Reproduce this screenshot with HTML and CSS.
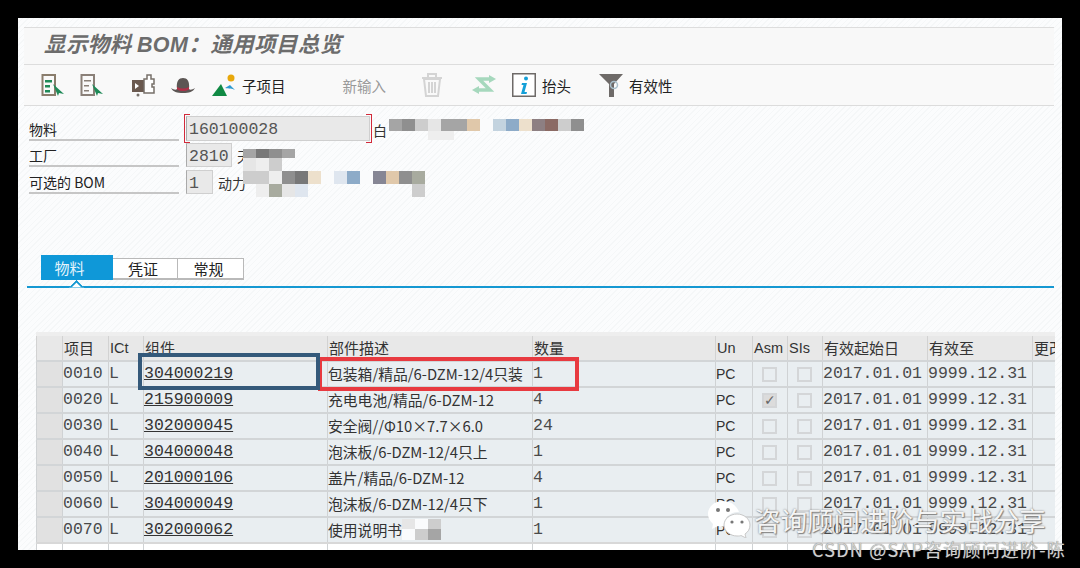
FILE: index.html
```html
<!DOCTYPE html>
<html lang="zh">
<head>
<meta charset="utf-8">
<title>显示物料 BOM</title>
<link rel="stylesheet" href="styles.css">
</head>
<body>
<div class="window">
  <header class="title"><h1>显示物料 <b class="latin">BOM</b>：通用项目总览</h1></header>
  <nav class="toolbar">
    <svg class="ico i1" width="24" height="24" viewBox="0 0 24 24"><path d="M1.500 2H14v20H1.500z" fill="none" stroke="#8a7d6c" stroke-width="2"/><path d="M4 7h7v2.500H4zM4 12h5v2.500H4zM4 17h5v2.500H4z" fill="#1f8a58"/><path d="M12 11l11 10-5-1-1 3z" fill="#1f8a58"/></svg>
    <svg class="ico i2" width="24" height="24" viewBox="0 0 24 24"><path d="M1.500 2H14v20H1.500z" fill="none" stroke="#8a8078" stroke-width="2"/><path d="M4 7h7v1.500H4zM4 12h5v1.500H4zM4 17h5v1.500H4z" fill="#8a8078"/><path d="M12 11l11 10-5-1-1 3z" fill="#1f8a58"/></svg>
    <svg class="ico i3" width="24" height="24" viewBox="0 0 24 24"><path d="M1 7h12v12H1z" fill="#6b5a50"/><path d="M4 10l4 3-4 3z" fill="#fff"/><path d="M13 6h3V2h4v4h3v5h-2v3h2v6h-10z" fill="#fff" stroke="#77706a" stroke-width="1.500"/><circle cx="7" cy="22" r="1.500" fill="#77706a"/></svg>
    <svg class="ico i4" width="24" height="24" viewBox="0 0 24 24"><path d="M0 15c3 2 5 2 6 1C5 8 8 5 12 5s7 3 6 11c1 1 3 1 6-1-2 4-6 5-12 5S2 19 0 15z" fill="#5c5654"/><path d="M6 14c4 2 8 2 12 0v2.500c-4 2-8 2-12 0z" fill="#b03048"/></svg>
    <svg class="ico i5" width="24" height="24" viewBox="0 0 24 24"><circle cx="19" cy="5" r="3.500" fill="#e8a80c"/><path d="M0 23L9 11l6 12z" fill="#108a44"/><path d="M13 15l5-3 5 5c-3-2-6-1-10-2z" fill="#2c9ad0"/></svg>
    <span class="tool t-sub">子项目</span>
    <span class="tool t-new">新输入</span>
    <svg class="ico i6" width="24" height="26" viewBox="0 0 24 26"><path d="M2 6h20M8 5V2h8v3" fill="none" stroke="#d4d4d4" stroke-width="2"/><path d="M4 7l2 17h12l2-17zM9 10v11M12 10v11M15 10v11" fill="none" stroke="#d4d4d4" stroke-width="2"/></svg>
    <svg class="ico i7" width="24" height="20" viewBox="0 0 24 20"><path d="M19 4H7l11 11H5" fill="none" stroke="#a6d8bd" stroke-width="3.500"/><path d="M17 0l7 4-7 4zM7 11l-7 4 7 4z" fill="#a6d8bd"/></svg>
    <svg class="ico i8" width="24" height="24" viewBox="0 0 24 24"><path d="M.75.75h22.500v22.500H.75z" fill="#fff" stroke="#6e6a68" stroke-width="1.500"/><circle cx="14" cy="5.500" r="2" fill="#14a0d8"/><path d="M10 10h5l-2.500 9H15l-.5 2H9l2.500-9H9.500z" fill="#14a0d8"/></svg>
    <span class="tool t-head">抬头</span>
    <svg class="ico i9" width="24" height="24" viewBox="0 0 24 24"><path d="M0 1h24l-9 10v13H10V11z" fill="#6e6a68"/><circle cx="15" cy="12" r="3.500" fill="none" stroke="#a9c0cc" stroke-width="1.500"/></svg>
    <span class="tool t-valid">有效性</span>
  </nav>

  <section class="form">
    <div class="row row-material">
      <label class="lbl">物料</label>
      <span class="field f-material">160100028</span>
      <span class="desc">白</span>
    </div>
    <div class="row row-plant">
      <label class="lbl">工厂</label>
      <span class="field f-plant">2810</span>
      <span class="desc">天</span>
    </div>
    <div class="row row-bom">
      <label class="lbl">可选的 BOM</label>
      <span class="field f-bom">1</span>
      <span class="desc">动力</span>
    </div>
  </section>

  <div class="tabs">
    <span class="tab active">物料</span>
    <span class="tab">凭证</span>
    <span class="tab">常规</span>
  </div>
  <div class="tabline"></div>

  <table class="grid">
    <colgroup>
      <col class="c-sel"><col class="c-item"><col class="c-ict"><col class="c-comp"><col class="c-desc"><col class="c-qty"><col class="c-un"><col class="c-asm"><col class="c-sis"><col class="c-from"><col class="c-to"><col class="c-chg">
    </colgroup>
    <thead>
      <tr><th></th><th>项目</th><th class="th-lat">ICt</th><th>组件</th><th>部件描述</th><th>数量</th><th class="th-lat">Un</th><th class="th-lat">Asm</th><th class="th-lat">SIs</th><th>有效起始日</th><th>有效至</th><th>更改</th></tr>
    </thead>
    <tbody>
      <tr><td class="sel"></td><td class="mono">0010</td><td class="mono">L</td><td class="mono"><a>304000219</a></td><td class="dsc">包装箱/精品/6-DZM-12/4只装</td><td class="mono">1</td><td class="un">PC</td><td><i class="cb"></i></td><td><i class="cb"></i></td><td class="mono">2017.01.01</td><td class="mono">9999.12.31</td><td></td></tr>
      <tr><td class="sel"></td><td class="mono">0020</td><td class="mono">L</td><td class="mono"><a>215900009</a></td><td class="dsc">充电电池/精品/6-DZM-12</td><td class="mono">4</td><td class="un">PC</td><td><i class="cb on">✓</i></td><td><i class="cb"></i></td><td class="mono">2017.01.01</td><td class="mono">9999.12.31</td><td></td></tr>
      <tr><td class="sel"></td><td class="mono">0030</td><td class="mono">L</td><td class="mono"><a>302000045</a></td><td class="dsc">安全阀//Φ10×7.7×6.0</td><td class="mono">24</td><td class="un">PC</td><td><i class="cb"></i></td><td><i class="cb"></i></td><td class="mono">2017.01.01</td><td class="mono">9999.12.31</td><td></td></tr>
      <tr><td class="sel"></td><td class="mono">0040</td><td class="mono">L</td><td class="mono"><a>304000048</a></td><td class="dsc">泡沫板/6-DZM-12/4只上</td><td class="mono">1</td><td class="un">PC</td><td><i class="cb"></i></td><td><i class="cb"></i></td><td class="mono">2017.01.01</td><td class="mono">9999.12.31</td><td></td></tr>
      <tr><td class="sel"></td><td class="mono">0050</td><td class="mono">L</td><td class="mono"><a>201000106</a></td><td class="dsc">盖片/精品/6-DZM-12</td><td class="mono">4</td><td class="un">PC</td><td><i class="cb"></i></td><td><i class="cb"></i></td><td class="mono">2017.01.01</td><td class="mono">9999.12.31</td><td></td></tr>
      <tr><td class="sel"></td><td class="mono">0060</td><td class="mono">L</td><td class="mono"><a>304000049</a></td><td class="dsc">泡沫板/6-DZM-12/4只下</td><td class="mono">1</td><td class="un">PC</td><td><i class="cb"></i></td><td><i class="cb"></i></td><td class="mono">2017.01.01</td><td class="mono">9999.12.31</td><td></td></tr>
      <tr><td class="sel"></td><td class="mono">0070</td><td class="mono">L</td><td class="mono"><a>302000062</a></td><td class="dsc">使用说明书</td><td class="mono">1</td><td class="un">PC</td><td><i class="cb"></i></td><td><i class="cb"></i></td><td class="mono">2017.01.01</td><td class="mono">9999.12.31</td><td></td></tr>
      <tr class="blank"><td></td><td></td><td></td><td></td><td></td><td></td><td></td><td></td><td></td><td></td><td></td><td></td></tr>
    </tbody>
  </table>

  <div class="mosaic m1"><i class="g3"></i><i class="g2"></i><i class="g5"></i><i class="g6"></i><i class="g3"></i><i class="g3"></i><i class="t1"></i><i class="w"></i><i class="b1"></i><i class="b2"></i><i class="t2"></i><i class="p1"></i><i class="p2"></i><i class="g5"></i><i class="g2"></i></div>
  <div class="mosaic m1b"><i class="g7"></i><i class="g7"></i></div>
  <div class="mosaic m2"><i class="g3"></i><i class="g1"></i><i class="g2"></i><i class="g3"></i></div>
  <div class="mosaic m3"><i class="g6"></i><i class="g7"></i><i class="g5"></i></div>
  <div class="mosaic m4"><i class="g5"></i><i class="g5"></i><i class="g7"></i><i class="g2"></i><i class="g1"></i><i class="t2"></i><i class="w"></i><i class="b3"></i><i class="b2"></i><i class="w"></i><i class="p3"></i><i class="t1"></i><i class="g2"></i><i class="g4"></i></div>
  <div class="mosaic m5"><i class="g7"></i><i class="g4"></i><i class="g6"></i><i class="b3"></i></div>
  <div class="mosaic m6"><i class="g5"></i></div>
  <div class="mosaic m7"><i class="g6"></i><i class="w"></i><i class="g5"></i></div>
  <div class="mosaic m8"><i class="w"></i><i class="g5"></i><i class="g3"></i></div>

  <div class="mark-red"></div>
  <div class="mark-blue"></div>
</div>

<svg class="wechat" width="44" height="38" viewBox="0 0 44 38"><path d="M16 1C7 1 1 7 1 14c0 4 2 7 5 10l-1 5 6-3c2 .5 4 .7 6 .5C16 18 24 11 32 12 30 6 24 1 16 1z" fill="#fff"/><path d="M30 14c-7 0-13 5-13 11s6 11 13 11c2 0 3 0 4-.5l5 2.500-1-4c3-2 5-5 5-9 0-6-6-11-13-11z" fill="#fff" stroke="#c8c8c8"/><circle cx="11" cy="10" r="2" fill="#777"/><circle cx="21" cy="10" r="2" fill="#777"/><circle cx="25" cy="22" r="1.600" fill="#777"/><circle cx="35" cy="22" r="1.600" fill="#777"/></svg>
<div class="wm wm-main">咨询顾问进阶与实战分享</div>
<div class="wm wm-csdn">CSDN @SAP咨询顾问进阶-陈</div>
</body>
</html>
```
FILE: styles.css
```css
* { box-sizing: border-box; }
html, body { margin: 0; height: 100%; }
body {
  width: 1080px;
  height: 568px;
  background: #000;
  padding: 18px;
  overflow: hidden;
  position: relative;
  font-family: "Noto Sans CJK SC", "Liberation Sans", sans-serif;
  color: #333;
}
.window {
  position: relative;
  width: 1044px;
  height: 532px;
  padding: 9px 8px 0 6px;
  overflow: hidden;
  background: repeating-linear-gradient(135deg, #fbfcfd 0 3px, #f5f7f8 3px 4px);
}
.title {
  height: 38px;
  background: #f8f8f8;
  border-top: 1px solid #ddd;
  border-bottom: 1px solid #ddd;
  padding-left: 20px;
}
.title h1 {
  margin: 0;
  font-size: 21.500px;
  line-height: 29px;
  font-weight: 700;
  font-style: italic;
  color: #6c6c6c;
  letter-spacing: 0.4px;
  white-space: nowrap;
}
.latin { font-family: "Liberation Sans", sans-serif; }
.toolbar {
  height: 41px;
  display: flex;
  align-items: center;
  background: #f9f9f9;
  border-bottom: 1px solid #dcdcdc;
}
.ico { flex: none; display: block; }
.i1 { margin-left: 17px; }
.i2 { margin-left: 15px; }
.i3 { margin-left: 27px; }
.i4 { margin-left: 16px; }
.i5 { margin-left: 17px; }
.i6 { margin-left: 34px; }
.i7 { margin-left: 28px; }
.i8 { margin-left: 16px; }
.i9 { margin-left: 28px; }
.tool { font-size: 14.500px; color: #222; white-space: nowrap; }
.t-sub { margin-left: 6px; }
.t-new { margin-left: 57px; color: #9a9a9a; }
.t-head { margin-left: 6px; }
.t-valid { margin-left: 6px; }

.form { padding: 9px 0 0 5px; height: 149px; }
.row { display: flex; align-items: flex-end; }
.row-material { height: 26px; }
.row-plant { height: 26px; }
.row-bom { height: 27px; }
.lbl {
  width: 150px;
  margin-right: 7px;
  height: 24px;
  font-size: 14px;
  line-height: 24px;
  color: #222;
  border-bottom: 2px solid #c6c6c6;
  white-space: nowrap;
}
.field {
  position: relative;
  display: block;
  height: 24px;
  padding-left: 2px;
  font-family: "Liberation Mono", monospace;
  font-size: 16.500px;
  line-height: 25px;
  color: #555;
  background: #e9e9e9;
  border: 1px solid #cfcfcf;
  border-left-color: #aaa;
  white-space: nowrap;
}
.f-material { width: 184px; height: 25px; }
.f-plant { width: 46px; }
.f-bom { width: 27px; }
.f-material::before, .f-material::after {
  content: "";
  position: absolute;
  top: -3px;
  bottom: -3px;
  width: 5px;
  border: 1.500px solid #d22a3a;
}
.f-material::before { left: -3px; border-right: 0; }
.f-material::after { right: -3px; border-left: 0; }
.desc { margin-left: 5px; font-size: 14px; line-height: 22px; color: #333; white-space: nowrap; }
.row-material .desc { margin-left: 3px; }

.tabs { display: flex; align-items: flex-end; height: 25px; margin-left: 17px; }
.tab {
  width: 65px;
  height: 22px;
  padding-right: 4px;
  font-size: 15px;
  line-height: 20px;
  text-align: center;
  color: #222;
  background: #fff;
  border: 1px solid #b9b9b9;
  border-left: 0;
  border-bottom-width: 2px;
}
.tab:last-child { width: 66px; }
.tab.active {
  width: 72px;
  height: 25px;
  padding-right: 15px;
  line-height: 25px;
  color: #e6f4fb;
  background: #0f98d8;
  border: 0;
}
.tabline {
  position: relative;
  height: 2px;
  margin: 6px 0 44px 3px;
  background: #1598d2;
}
.tabline::after {
  content: "";
  position: absolute;
  left: 44px;
  top: -4px;
  width: 9px;
  height: 9px;
  transform: rotate(45deg);
  background: #fff;
  border-top: 2px solid #1598d2;
  border-left: 2px solid #1598d2;
  clip-path: polygon(0 0, 100% 0, 0 100%);
}

.grid {
  table-layout: fixed;
  border-collapse: collapse;
  width: 1018px;
  margin-left: 12px;
  border-top: 4px solid #eeeeee;
}
.c-sel { width: 26px; } .c-item { width: 46px; } .c-ict { width: 35px; } .c-comp { width: 184px; }
.c-desc { width: 205px; } .c-qty { width: 183px; } .c-un { width: 37px; } .c-asm { width: 35px; }
.c-sis { width: 35px; } .c-from { width: 105px; } .c-to { width: 105px; } .c-chg { width: 22px; }
.grid th {
  height: 24px;
  padding: 0 0 0 1px;
  text-align: left;
  font-size: 15px;
  font-weight: 400;
  line-height: 24px;
  color: #333;
  background: #e8e8e8;
  border-left: 1px solid #d2d2d2;
  overflow: hidden;
  white-space: nowrap;
}
.grid .th-lat { font-family: "Liberation Sans", sans-serif; font-size: 14.500px; }
.grid td {
  height: 26px;
  padding: 0;
  background: #e9eef1;
  border-top: 2px solid #d2d5d7;
  border-left: 1px solid #cfd2d4;
  white-space: nowrap;
  overflow: hidden;
  line-height: 24px;
}
.grid td.sel { background: #e1e1e1; }
.grid tr.blank td { background: #fff; border-top-color: #d8d8d8; }
.mono { font-family: "Liberation Mono", monospace; font-size: 16.500px; color: #4a4a4a; }
.mono a { color: #333; text-decoration: underline; }
.dsc { font-size: 14.800px; color: #333; }
.un { font-family: "Liberation Sans", sans-serif; font-size: 14px; color: #333; }
.cb {
  display: block;
  width: 15px;
  height: 15px;
  margin-left: 9px;
  border: 2px solid #d4d6d8;
  font-style: normal;
  font-size: 14px;
  line-height: 11px;
  color: #666;
  text-align: center;
  font-family: "DejaVu Sans", sans-serif;
}
.cb.on { background: #dcdcdc; }

.mosaic { position: absolute; display: flex; height: 13px; }
.mosaic i { display: block; width: 13px; }
.m1 { left: 371px; top: 101px; height: 12px; }
.m1b { left: 410px; top: 113px; height: 9px; }
.m2 { left: 225px; top: 131px; height: 9px; }
.m3 { left: 225px; top: 140px; }
.m4 { left: 225px; top: 153px; }
.m5 { left: 238px; top: 166px; }
.m6 { left: 394px; top: 166px; }
.m7 { left: 384px; top: 501px; height: 10px; }
.m8 { left: 384px; top: 511px; height: 11px; }
.g1 { background: #787878; } .g2 { background: #8f8f8f; } .g3 { background: #a5a5a5; }
.g4 { background: #a8ab9f; } .g5 { background: #cdcdcd; } .g6 { background: #e6e6e6; }
.g7 { background: #eeeeee; } .w { background: #fafbfc; }
.t1 { background: #e0c8aa; } .t2 { background: #ede0cc; }
.b1 { background: #c3d3df; } .b2 { background: #8dabc8; } .b3 { background: #dfe6ef; }
.p1 { background: #8d7f82; } .p2 { background: #8b6a64; } .p3 { background: #868694; }

.mark-blue {
  position: absolute;
  left: 120px;
  top: 335px;
  width: 182px;
  height: 37px;
  border: 4px solid #34597a;
}
.mark-red {
  position: absolute;
  left: 300px;
  top: 339px;
  width: 261px;
  height: 34px;
  border: 4px solid #e83a40;
}

.wechat { position: absolute; left: 707px; top: 500px; }
.wm { position: absolute; white-space: nowrap; color: #fff; }
.wm-main {
  left: 754px;
  top: 501px;
  font-size: 26.500px;
  line-height: 38px;
  color: #f4f4f4;
  text-shadow: 0 0 2px #777, 1px 1px 1px #888;
}
.wm-csdn {
  left: 812px;
  top: 538px;
  font-size: 18px;
  letter-spacing: 1.200px;
  line-height: 22px;
  color: #cfcfcf;
  text-shadow: 0 0 1px #666;
}
```
